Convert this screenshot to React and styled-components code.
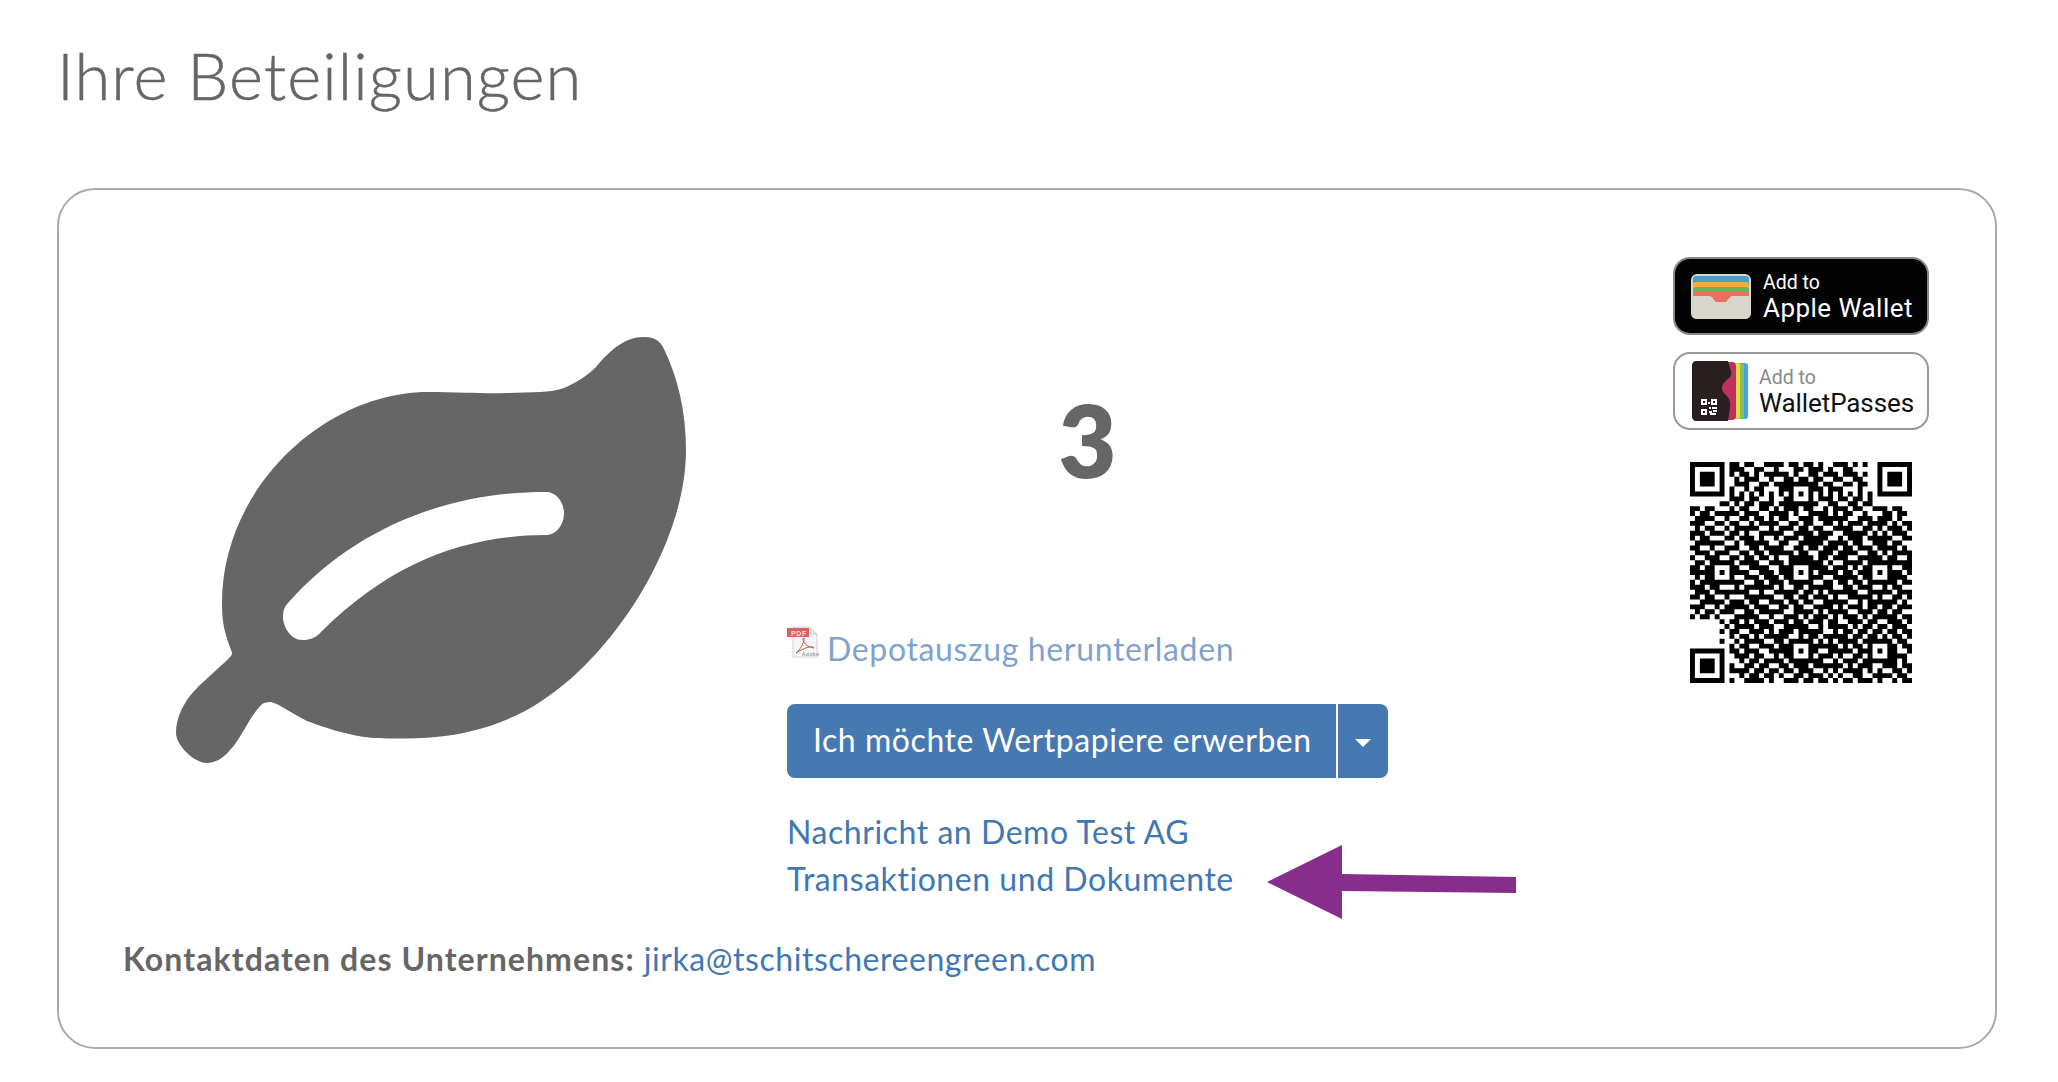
import React from "react";
import styled, { createGlobalStyle } from "styled-components";

const GlobalStyle = createGlobalStyle`
  html, body {
    margin: 0;
    padding: 0;
    background: #fff;
    font-family: "Lato", "Liberation Sans", sans-serif;
    color: #666;
  }
`;

const Page = styled.div`
  width: 2058px;
  height: 1082px;
  padding: 0 61px 0 57px;
  box-sizing: border-box;
  overflow: hidden;
`;

const Title = styled.h1`
  margin: 0;
  padding-top: 36px;
  height: 188px;
  box-sizing: border-box;
  font-size: 65px;
  line-height: 78px;
  font-weight: 300;
  letter-spacing: 1.1px;
  color: #666;
  -webkit-text-stroke: 0.5px #666;
`;

const Card = styled.section`
  position: relative;
  height: 861px;
  box-sizing: border-box;
  border: 2px solid #aaa;
  border-radius: 38px;
  padding: 67px 66px 0 0;
`;

const Main = styled.div`
  display: grid;
  grid-template-columns: 728px 601px 1fr 256px;
  height: 678px;
`;

const LeafBox = styled.div`
  padding: 80px 0 0 117px;
`;

const Center = styled.div`
  display: flex;
  flex-direction: column;
`;

const Count = styled.div`
  margin-top: 122px;
  text-align: center;
  font-size: 100px;
  line-height: 120px;
  font-weight: 800;
  color: #666;
`;

const PdfLink = styled.a`
  display: flex;
  align-items: flex-start;
  margin-top: 126px;
  height: 47px;
  font-size: 32px;
  line-height: 47px;
  letter-spacing: 0.65px;
  color: #7fa3cd;
`;

const PdfIcon = styled.svg`
  width: 31px;
  height: 32px;
  margin: 1px 9px 0 0;
  flex: none;
  overflow: visible;
`;

const SplitButton = styled.div`
  display: flex;
  margin-top: 32px;
  width: 601px;
  height: 74px;
  border-radius: 8px;
  background: #4679b2;
  color: #fff;
  overflow: hidden;
`;

const ButtonLabel = styled.div`
  flex: none;
  width: 549px;
  padding-left: 26px;
  box-sizing: border-box;
  font-size: 32px;
  line-height: 72px;
  letter-spacing: 0.55px;
  white-space: nowrap;
`;

const ButtonCaret = styled.div`
  flex: 1;
  display: flex;
  align-items: center;
  justify-content: center;
  border-left: 2px solid #fff;

  &::after {
    content: "";
    margin-top: 4px;
    border-left: 8px solid transparent;
    border-right: 8px solid transparent;
    border-top: 8px solid #fff;
  }
`;

const LinkList = styled.div`
  display: flex;
  flex-direction: column;
  margin-top: 30px;
`;

const TextLink = styled.a`
  font-size: 32px;
  line-height: 47px;
  letter-spacing: 0.55px;
  color: #4177b2;
  white-space: nowrap;
`;

const Side = styled.div`
  grid-column: 4;
  display: flex;
  flex-direction: column;
  gap: 17px;
`;

const Badge = styled.div`
  display: flex;
  align-items: center;
  height: 78px;
  box-sizing: border-box;
  border: 2px solid ${(p) => (p.$dark ? "#888" : "#999")};
  border-radius: 17px;
  background: ${(p) => (p.$dark ? "#030303" : "#fff")};
  padding-left: ${(p) => (p.$dark ? "16px" : "17px")};
  font-family: "Roboto", "Liberation Sans", sans-serif;
`;

const BadgeText = styled.div`
  display: flex;
  flex-direction: column;
  margin-left: ${(p) => (p.$dark ? "12px" : "11px")};
  color: ${(p) => (p.$dark ? "#fff" : "#111")};
  white-space: nowrap;
`;

const BadgeSmall = styled.span`
  font-size: 19.5px;
  line-height: 24px;
  color: ${(p) => (p.$dark ? "#fff" : "#888")};
`;

const BadgeBig = styled.span`
  font-size: 26px;
  line-height: 27px;
  letter-spacing: ${(p) => (p.$dark ? "0.45px" : "-0.1px")};
`;

const QrBox = styled.div`
  display: flex;
  justify-content: center;
  margin-top: 15px;
`;

const Contact = styled.div`
  padding-left: 64px;
  font-size: 32px;
  line-height: 47px;
  white-space: nowrap;
  letter-spacing: 0.55px;
`;

const ContactLabel = styled.strong`
  font-weight: 700;
  color: #666;
  margin-right: 9px;
  letter-spacing: 1.08px;
`;

const Arrow = styled.svg`
  position: absolute;
  left: 1208px;
  top: 655px;
`;

const QR_ROWS = `
11111 11011 01100 11110 11011 01001 11010 10111 11111
10000 01011 10011 00100 01101 11010 01100 00100 00001
00000 00010 11010 11111 01001 10111 01110 10000 00000
00000 00001 01110 01001 10110 11001 10011 00000 00000
00000 00001 11001 10111 01100 10110 01101 10000 00000
00000 00010 01011 00011 01011 11011 10001 00000 00000
00000 00000 00000 00000 00000 00000 00000 00000 00000
00000 00011 10110 01001 11010 01110 11011 01000 00000
00000 00101 01101 11011 00110 10011 00110 11000 00000
11011 01010 11001 10101 11011 00101 11011 00111 01100
10110 10111 01110 01111 01001 11101 01100 10001 10110
01111 01100 11011 01011 00111 01111 11001 11011 10100
11100 11011 00101 11100 11011 00110 10111 01111 01011
01011 01101 11110 01011 10110 11001 11100 11010 11101
11101 10011 01001 11110 01111 01110 01111 10101 01110
10110 01110 11101 00101 11011 11100 10111 01111 10011
01111 11001 01111 10011 00111 11011 11011 00111 01100
11001 01111 00110 11110 01101 10111 01101 11011 11010
01110 10100 11011 01111 10110 01110 11110 01101 01111
10011 11011 01101 10100 11111 01101 11001 11110 11001
01101 00110 11110 01110 01011 11010 01111 01010 11111
11010 11101 00111 10011 11010 11101 11010 11101 10011
11110 00101 11001 11011 01110 01111 01101 11011 11101
01011 11010 01110 11101 10011 11001 11110 10110 01110
10110 01111 10011 01110 11101 00110 11011 01111 11011
11101 11001 01111 11010 01101 11110 01101 11001 01100
01110 10111 11001 00111 11011 01011 11110 01111 10111
11011 01100 01111 11001 10110 11101 00111 11010 01101
00111 11011 10110 01110 11011 00111 11001 01111 11010
11100 10111 11011 10011 01100 11110 10111 01101 10111
01011 01110 01101 11110 01111 01011 11001 11011 01100
10110 11001 11110 01001 11010 11101 01110 10111 11011
00000 00011 01011 10111 01101 11011 00111 01100 11101
00000 00101 11101 11001 11110 01011 11010 11011 01110
00000 00011 00111 01011 10111 11001 01101 10110 11011
00000 00010 11010 11111 00101 10111 11011 01101 01101
00000 00001 01111 00110 11111 01010 11110 11011 10110
00000 00010 11001 11011 01101 11111 01011 00101 11011
00000 00011 01110 01111 11010 10011 11101 11111 01001
00000 00001 11011 00101 01111 01110 10011 01011 11110
00000 00000 10110 11110 11001 11001 01110 11111 01010
00000 00010 01101 10011 01110 11111 10101 11001 11011
00000 00011 11011 01101 10111 00101 01111 01010 01101
00000 00000 10110 11010 01101 11010 10011 00111 10110
00000 00010 01111 01001 11011 01101 01101 11010 01011
`;

// placeholder data modules, only the look of the reference, not a scannable code
// finder, timing and alignment patterns are stamped on top
const buildQrPath = () => {
  const size = 45;
  const grid = QR_ROWS.trim()
    .split("\n")
    .map((row) => row.replace(/ /g, "").split("").map((c) => c === "1"));
  const finder = (ox, oy) => {
    for (let y = -1; y <= 7; y++) {
      for (let x = -1; x <= 7; x++) {
        const gx = ox + x;
        const gy = oy + y;
        if (gx < 0 || gy < 0 || gx >= size || gy >= size) continue;
        const ring = x === 0 || x === 6 || y === 0 || y === 6;
        const core = x >= 2 && x <= 4 && y >= 2 && y <= 4;
        const inside = x >= 0 && x <= 6 && y >= 0 && y <= 6;
        grid[gy][gx] = inside && (ring || core);
      }
    }
  };
  for (let i = 8; i < size - 8; i++) {
    grid[6][i] = i % 2 === 0;
    grid[i][6] = i % 2 === 0;
  }
  [6, 22, 38].forEach((cy) => {
    [6, 22, 38].forEach((cx) => {
      if ((cx === 6 && cy === 6) || (cx === 38 && cy === 6) || (cx === 6 && cy === 38)) return;
      for (let y = -2; y <= 2; y++) {
        for (let x = -2; x <= 2; x++) {
          grid[cy + y][cx + x] = Math.max(Math.abs(x), Math.abs(y)) !== 1;
        }
      }
    });
  });
  finder(0, 0);
  finder(size - 7, 0);
  finder(0, size - 7);
  let d = "";
  grid.forEach((row, y) => {
    row.forEach((on, x) => {
      if (on) d += `M${x} ${y}h1v1h-1z`;
    });
  });
  return d;
};

const QrCode = () => (
  <svg width="222" height="221" viewBox="0 0 45 45" preserveAspectRatio="none">
    <path d={buildQrPath()} fill="#000" />
  </svg>
);

const Leaf = () => (
  <svg width="510" height="426" viewBox="0 0 510 426">
    <path
      fillRule="evenodd"
      fill="#666"
      d="M467 0C478 0 483 3 487 10C502 40 510 75 510 113C510 205 440 315 367 363C335 385 295 397 260 400C235 402 205 402 188 400C165 396 150 391 131 384C115 376 105 368 95 365C90 365 87 366 85 368C72 382 65 402 54 413C47 422 38 426 31 426C18 426 0 408 0 396C0 382 6 370 13 360C25 345 45 330 54 320C57 317 56 315 55 313C50 298 46 290 46 266C46 150 150 55 252 55C285 55 310 57 331 56C355 55 375 56 388 51C402 45 412 38 420 30C435 12 450 0 467 0Z
      M112 266C175 195 265 155 370 155C380 155 388 165 388 176C388 188 380 198 370 198C290 198 215 225 145 295C138 303 130 303 126 303C115 303 107 290 107 280C107 275 108 270 112 266Z"
    />
  </svg>
);

const PdfGlyph = () => (
  <PdfIcon viewBox="0 0 31 32">
    <path d="M6 1H23L30 8V31H6Z" fill="#f6f6f6" stroke="#d4d4d4" strokeWidth="1" />
    <path d="M23 1V8H30" fill="#e4e4e4" stroke="#ccc" strokeWidth="1" />
    <rect x="0" y="2" width="22" height="9" fill="#d9635e" />
    <text x="4" y="9.5" fontSize="7" fontWeight="700" fill="#f5dcdc" fontFamily="Liberation Sans, sans-serif">PDF</text>
    <path d="M9 27C13 24 17 17 17 13C17 11 16 12 16 14C17 18 21 21 27 22C25 19 17 22 9 27Z" fill="none" stroke="#d8504c" strokeWidth="1" />
    <text x="15" y="29.5" fontSize="5" fill="#777" fontFamily="Liberation Sans, sans-serif">Adobe</text>
  </PdfIcon>
);

const AppleWalletIcon = () => (
  <svg width="60" height="45" viewBox="0 0 60 45">
    <defs>
      <clipPath id="walletClip">
        <rect width="60" height="45" rx="6" />
      </clipPath>
    </defs>
    <g clipPath="url(#walletClip)">
      <rect width="60" height="45" fill="#d9d6cc" />
      <rect x="2" y="2" width="56" height="9" rx="3" fill="#4a9bd0" />
      <rect x="2" y="8" width="56" height="9" rx="3" fill="#f0ad3c" />
      <rect x="2" y="13" width="56" height="9" rx="3" fill="#6ab356" />
      <rect x="2" y="18" width="56" height="10" rx="3" fill="#e8705c" />
      <path d="M0 22H18C23 22 23 30 30 30C37 30 37 22 42 22H60V45H0Z" fill="#d9d6cc" />
    </g>
  </svg>
);

const WalletPassesIcon = () => (
  <svg width="56" height="60" viewBox="0 0 56 60">
    <rect x="30" y="2" width="26" height="56" rx="3" fill="#3ba7ea" />
    <rect x="26" y="2" width="26" height="56" rx="3" fill="#8cc152" />
    <rect x="22" y="2" width="26" height="56" rx="3" fill="#e6d94a" />
    <rect x="18" y="1" width="26" height="58" rx="4" fill="#c1305c" />
    <path d="M4 0H36C38 8 41 12 38 16C34 20 30 22 30 27C30 32 35 34 37 38C39 42 38 50 36 60H4C2 60 0 58 0 56V4C0 2 2 0 4 0Z" fill="#2a1f20" />
    <g fill="#fff">
      <rect x="9" y="38" width="6" height="6" />
      <rect x="19" y="38" width="6" height="6" />
      <rect x="9" y="48" width="6" height="6" />
      <rect x="16" y="41" width="2" height="2" />
      <rect x="17" y="46" width="2" height="2" />
      <rect x="20" y="46" width="5" height="2" />
      <rect x="17" y="50" width="3" height="2" />
      <rect x="21" y="49" width="4" height="2" />
      <rect x="18" y="52" width="6" height="2" />
    </g>
    <g fill="#2a1f20">
      <rect x="11" y="40" width="2" height="2" />
      <rect x="21" y="40" width="2" height="2" />
      <rect x="11" y="50" width="2" height="2" />
    </g>
  </svg>
);

export default function App() {
  return (
    <Page>
      <GlobalStyle />
      <Title>Ihre Beteiligungen</Title>
      <Card>
        <Main>
          <LeafBox>
            <Leaf />
          </LeafBox>
          <Center>
            <Count>3</Count>
            <PdfLink>
              <PdfGlyph />
              Depotauszug herunterladen
            </PdfLink>
            <SplitButton>
              <ButtonLabel>Ich möchte Wertpapiere erwerben</ButtonLabel>
              <ButtonCaret />
            </SplitButton>
            <LinkList>
              <TextLink>Nachricht an Demo Test AG</TextLink>
              <TextLink>Transaktionen und Dokumente</TextLink>
            </LinkList>
          </Center>
          <Side>
            <Badge $dark>
              <AppleWalletIcon />
              <BadgeText $dark>
                <BadgeSmall $dark>Add to</BadgeSmall>
                <BadgeBig $dark>Apple Wallet</BadgeBig>
              </BadgeText>
            </Badge>
            <Badge>
              <WalletPassesIcon />
              <BadgeText>
                <BadgeSmall>Add to</BadgeSmall>
                <BadgeBig>WalletPasses</BadgeBig>
              </BadgeText>
            </Badge>
            <QrBox>
              <QrCode />
            </QrBox>
          </Side>
        </Main>
        <Contact>
          <ContactLabel>Kontaktdaten des Unternehmens:</ContactLabel>
          <TextLink>jirka@tschitschereengreen.com</TextLink>
        </Contact>
        <Arrow width="250" height="76" viewBox="0 0 250 76">
          <path d="M0 37L75 0V29L249 32V48L75 46V74Z" fill="#872d8c" />
        </Arrow>
      </Card>
    </Page>
  );
}
